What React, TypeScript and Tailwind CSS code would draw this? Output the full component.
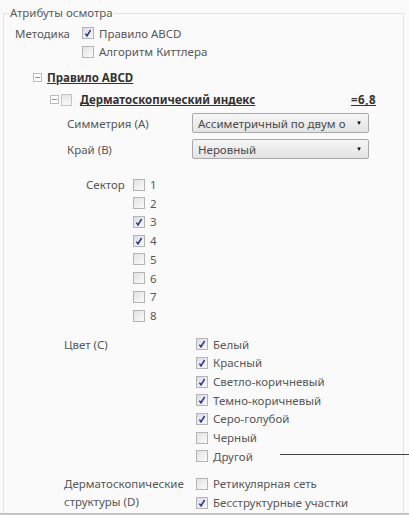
import React from "react";

function Check({ on }: { on?: boolean }) {
  return (
    <span
      className={
        "relative inline-block w-[12px] h-[12px] shrink-0 border border-[#b4b4b4] bg-gradient-to-br " +
        (on ? "from-[#dcdce8] to-[#f8f8fc]" : "from-[#e2e2e2] to-[#fbfbfb]")
      }
    >
      {on && (
        <svg viewBox="0 0 12 12" className="absolute left-[-1px] top-[-1px] w-[12px] h-[12px]">
          <path d="M3.4 6.6 L5 8.8 L8.6 3" fill="none" stroke="#2c3580" strokeWidth="1.5" />
        </svg>
      )}
    </span>
  );
}

function Expander() {
  return (
    <span className="relative inline-block w-[9px] h-[9px] shrink-0 border border-[#bcbcbc] bg-white">
      <span className="absolute left-[1px] right-[1px] top-[3px] h-[1px] bg-[#929292]" />
    </span>
  );
}

function Select({ value }: { value: string }) {
  return (
    <div className="flex items-center w-[177px] h-[20px] pl-[5px] pr-[6px] rounded-[2px] border border-[#a9a9a9] bg-gradient-to-b from-[#f6f6f6] to-[#e3e3e3] text-[#4a4a4a]">
      <span className="flex-1 whitespace-nowrap overflow-hidden">{value}</span>
      <span className="text-[6px] text-black">▼</span>
    </div>
  );
}

function CheckRow({ label, on }: { label: string; on?: boolean }) {
  return (
    <div className="flex items-center h-[18.7px] gap-[5px]">
      <Check on={on} />
      <span>{label}</span>
    </div>
  );
}

const sectors = [
  { n: "1" },
  { n: "2" },
  { n: "3", on: true },
  { n: "4", on: true },
  { n: "5" },
  { n: "6" },
  { n: "7" },
  { n: "8" },
];

const colors = [
  { n: "Белый", on: true },
  { n: "Красный", on: true },
  { n: "Светло-коричневый", on: true },
  { n: "Темно-коричневый", on: true },
  { n: "Серо-голубой", on: true },
  { n: "Черный" },
  { n: "Другой" },
];

export default function App() {
  return (
    <div className="relative w-[409px] h-[515px] overflow-hidden bg-[#fafafa] border-b-2 border-[#c4c4c4] text-[11.5px] text-[#575757] font-['Noto_Sans',sans-serif]">
      <fieldset className="absolute left-[3px] top-[6px] w-[401px] h-[520px] border border-[#e2e2e2] px-0">
        <legend className="ml-[5px] px-[1px] leading-[14px] text-[#5a5a5a]">Атрибуты осмотра</legend>

        <div className="flex pl-[11px] mt-[4px]">
          <span className="w-[67px] h-[18.7px] flex items-center">Методика</span>
          <div className="flex flex-col">
            <CheckRow label="Правило ABCD" on />
            <CheckRow label="Алгоритм Киттлера" />
          </div>
        </div>

        <div className="flex items-center gap-[5px] pl-[29px] mt-[7px] h-[19px]">
          <Expander />
          <span className="font-bold underline text-[#333]">Правило ABCD</span>
        </div>

        <div className="flex items-center pl-[46px] mt-[2px] h-[21px] w-[372px]">
          <Expander />
          <span className="ml-[2px] w-[11px] h-[12px] border border-[#c4c4c4] bg-gradient-to-b from-[#e6e6e6] to-[#fafafa]" />
          <span className="ml-[8px] flex-1 font-bold underline text-[#333]">Дерматоскопический индекс</span>
          <span className="font-bold underline text-[#333] tracking-[0.5px]">=6,8</span>
        </div>

        <div className="flex items-center pl-[63px] mt-[2px] h-[22px]">
          <span className="w-[125px]">Симметрия (А)</span>
          <Select value="Ассиметричный по двум о" />
        </div>
        <div className="flex items-center pl-[63px] mt-[4px] h-[22px]">
          <span className="w-[125px]">Край (В)</span>
          <Select value="Неровный" />
        </div>

        <div className="flex pl-[82px] mt-[15px]">
          <span className="w-[47px] h-[18.7px] flex items-center">Сектор</span>
          <div className="flex flex-col">
            {sectors.map((s) => (
              <CheckRow key={s.n} label={s.n} on={s.on} />
            ))}
          </div>
        </div>

        <div className="flex pl-[60px] mt-[10px]">
          <span className="w-[132px] h-[18.7px] flex items-center">Цвет (С)</span>
          <div className="flex flex-col">
            {colors.map((c) => (
              <CheckRow key={c.n} label={c.n} on={c.on} />
            ))}
          </div>
        </div>

        <div className="flex pl-[60px] mt-[9px]">
          <span className="w-[132px] leading-[18.7px]">
            Дерматоскопические
            <br />
            структуры (D)
          </span>
          <div className="flex flex-col">
            <CheckRow label="Ретикулярная сеть" />
            <CheckRow label="Бесструктурные участки" on />
          </div>
        </div>
      </fieldset>

      {/* divider next to the colour list */}
      <div className="absolute left-[280px] top-[454px] w-[129px] h-[1px] bg-[#444]" />
    </div>
  );
}
